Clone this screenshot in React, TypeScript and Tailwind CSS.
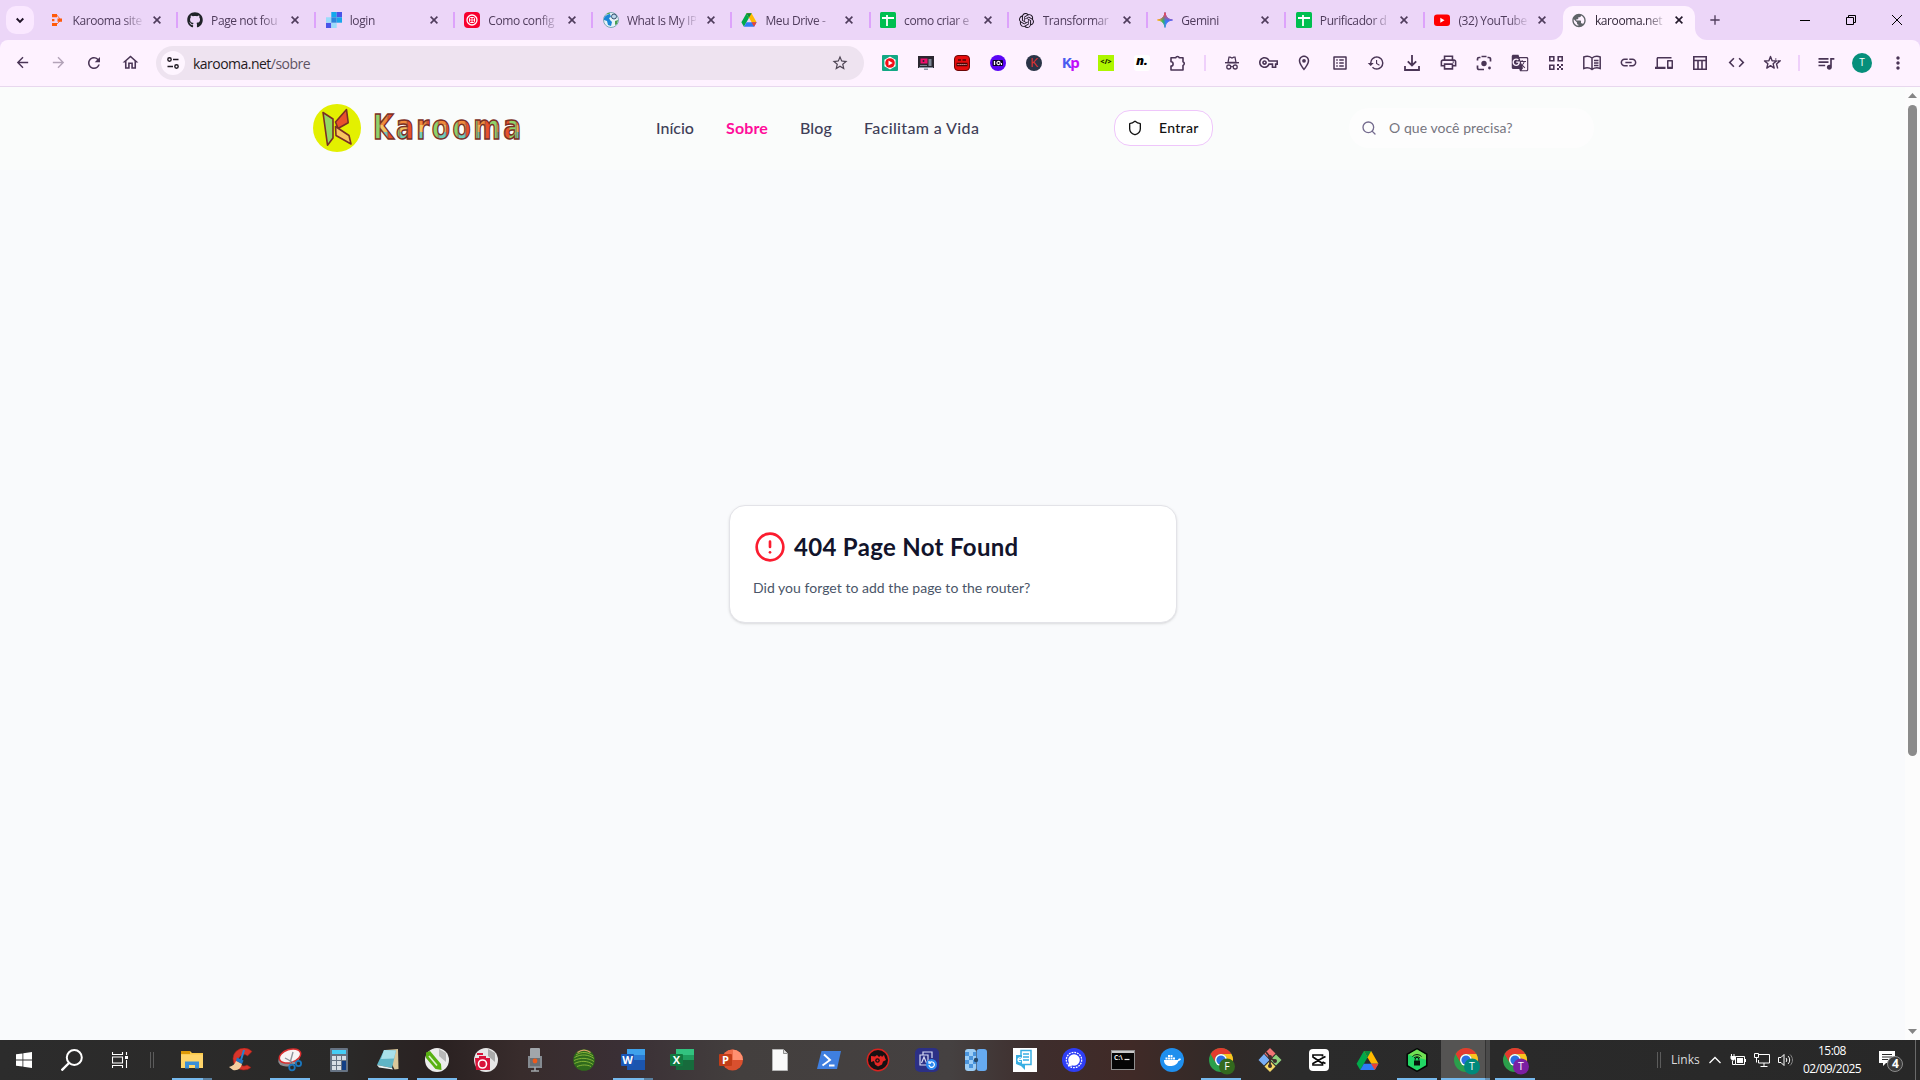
import React from "react";
import {
  MdArrowBack, MdArrowForward, MdRefresh, MdOutlineHome, MdStarBorder, MdOutlineVpnKey, MdOutlineLocationOn,
  MdOutlineListAlt, MdHistory, MdOutlinePrint, MdGTranslate, MdLink, MdDevices, MdCode,
  MdQueueMusic, MdMoreVert, MdPublic, MdAdd,
} from "react-icons/md";
import { FaGithub } from "react-icons/fa";
import { SiOpenai } from "react-icons/si";
import { CircleAlert, Search, Shield } from "lucide-react";

type SvgProps = { s?: number; vb?: string; children: React.ReactNode; className?: string };
const Svg = ({ s = 24, vb = "0 0 24 24", children, className = "" }: SvgProps) => (
  <svg width={s} height={s} viewBox={vb} fill="none" className={`shrink-0 ${className}`}>{children}</svg>
);

/* ---------- Favicons ---------- */
const Sheets = () => (
  <Svg s={16} vb="0 0 16 16">
    <rect width="16" height="16" rx="1.5" fill="#00bf50" />
    <path d="M2 6h12M7 3v11" stroke="#fff" strokeWidth="1.8" />
  </Svg>
);
const Drive = ({ s = 16 }: { s?: number }) => (
  <Svg s={s} vb="0 0 24 22">
    <path d="M8.2 1h7.6L12 7.800z" fill="#188038" />
    <path d="M8.200 1L.6 14.400 4.400 21 12 7.800z" fill="#00a94b" />
    <path d="M15.800 1H8.200L12 7.800l4 6.600h7.400z" fill="#ffba00" />
    <path d="M8.200 1L12 7.800l3.800-6.800z" fill="#0a8a3c" />
    <path d="M4.400 21h15.200l3.800-6.600H8.200z" fill="#2f7cf6" />
    <path d="M19.600 21l3.800-6.600h-7.700z" fill="#ea4335" />
  </Svg>
);
const favicons: Record<string, React.ReactNode> = {
  karooma: (
    <Svg s={16} vb="0 0 16 16">
      <path d="M3 2h5v3.2H3zM8.500 6.400H13v3.400H8.500zM3 11h5v3H3zM3 7h2.400v2.200H3z" fill="#ff5a0a" />
      <path d="M7 2l4 5M7 13l4-4" stroke="#ff5a0a" strokeWidth=".8" />
    </Svg>
  ),
  github: <FaGithub size={16} color="#1f2328" />,
  login: (
    <Svg s={16} vb="0 0 16 16">
      <path d="M5.300 0h5.400v5.300H5.300z" fill="#13a9ec" />
      <path d="M10.700 0H16v5.300h-5.300zM0 10.700h5.300V16H0z" fill="#4a54e8" />
      <path d="M0 5.300h5.300v5.400H0zM5.300 10.700h5.400V16H5.300z" fill="#9adcfa" />
      <path d="M5.300 5.300h5.400v5.400H5.300z" fill="#2c86dc" />
      <path d="M10.700 5.300H16v5.400h-5.300z" fill="#17a6ea" />
    </Svg>
  ),
  target: (
    <Svg s={16} vb="0 0 16 16">
      <rect width="16" height="16" rx="4" fill="#f8002e" />
      <circle cx="8" cy="8" r="5" stroke="#fff" strokeWidth="1.300" />
      <rect x="5.500" y="5.500" width="5" height="5" rx="1" stroke="#fff" />
      <path d="M5.500 8h5M8 5.500v5" stroke="#fff" strokeWidth=".8" />
    </Svg>
  ),
  ip: (
    <Svg s={16} vb="0 0 16 16">
      <circle cx="8" cy="8" r="7.500" fill="#e8f3f7" stroke="#7ba7b4" />
      <path d="M1 6c2-3 4-4 6-4l1 3-2 1 1 2 2 2-1 4-3-1-1-4-3-1z" fill="#1c86d6" />
      <path d="M12 9l3-1-1 4-2 1z" fill="#4a9f52" />
      <circle cx="11" cy="4.500" r="2.500" fill="#bcd7ec" stroke="#37506e" />
      <path d="M4 2l3-1" stroke="#59a94c" />
    </Svg>
  ),
  drive: <Drive />,
  sheets: <Sheets />,
  openai: <SiOpenai size={15} color="#1a1320" />,
  gemini: (
    <svg width="16" height="16" viewBox="0 0 16 16">
      <defs>
        <linearGradient id="gem" x1="0" y1="8" x2="16" y2="8" gradientUnits="userSpaceOnUse">
          <stop offset=".1" stopColor="#f9c012" /><stop offset=".38" stopColor="#28b46a" />
          <stop offset=".55" stopColor="#3a7bfa" /><stop offset="1" stopColor="#4a58f8" />
        </linearGradient>
        <linearGradient id="gemTop" x1="0" y1="0" x2="0" y2="9" gradientUnits="userSpaceOnUse">
          <stop offset=".2" stopColor="#f0405a" /><stop offset="1" stopColor="#f0405a" stopOpacity="0" />
        </linearGradient>
      </defs>
      <path d="M8 .5C8.700 5 11 7.300 15.500 8 11 8.700 8.700 11 8 15.500 7.300 11 5 8.700.5 8 5 7.300 7.300 5 8 .5z" fill="url(#gem)" stroke="url(#gem)" />
      <path d="M8 .5C8.700 5 11 7.300 15.500 8 11 8.700 8.700 11 8 15.500 7.300 11 5 8.700.5 8 5 7.300 7.300 5 8 .5z" fill="url(#gemTop)" stroke="url(#gemTop)" />
    </svg>
  ),
  youtube: (
    <Svg s={16} vb="0 0 16 16">
      <rect y="2.500" width="16" height="11.500" rx="3" fill="#f00" />
      <path d="M6.300 5.800v5l4.200-2.500z" fill="#fff" />
    </Svg>
  ),
  globe: <MdPublic size={17} color="#5f6368" />,
};

const tabs = [
  { icon: "karooma", title: "Karooma site" },
  { icon: "github", title: "Page not fou" },
  { icon: "login", title: "login" },
  { icon: "target", title: "Como config" },
  { icon: "ip", title: "What Is My IP" },
  { icon: "drive", title: "Meu Drive -" },
  { icon: "sheets", title: "como criar e" },
  { icon: "openai", title: "Transformar" },
  { icon: "gemini", title: "Gemini" },
  { icon: "sheets", title: "Purificador d" },
  { icon: "youtube", title: "(32) YouTube" },
];

const TabBody = ({ icon, title, active = false }: { icon: string; title: string; active?: boolean }) => (
  <>
    <span className="flex w-4 shrink-0 items-center justify-center">{favicons[icon]}</span>
    <span
      className={`mt-px ml-2 w-[69px] text-[12px] leading-4 tracking-[-0.4px] whitespace-nowrap [mask-image:linear-gradient(to_right,#000_50px,transparent_72px)] ${active ? "text-[#33283a]" : "text-[#4f3c5c]"}`}
    >
      {title}
    </span>
    <Svg s={8} vb="0 0 8 8" className={`ml-[11px] ${active ? "text-[#241a2c]" : "text-[#4f3c5c]"}`}>
      <path d="M.6.6l6.800 6.800M7.400.6L.6 7.400" stroke="currentColor" strokeWidth="1.600" />
    </Svg>
  </>
);

const TabStrip = () => (
  <div className="flex h-10 items-stretch bg-[#ecd6f8]">
    <div className="flex w-[37px] items-center pl-1.5">
      <div className="flex size-7 items-center justify-center rounded-[10px] bg-[#fae8ff]">
        <Svg s={8} vb="0 0 8 8"><path d="M.7 2.500L4 5.800l3.300-3.300" stroke="#1f1326" strokeWidth="1.900" /></Svg>
      </div>
    </div>
    {tabs.map((t, i) => (
      <div key={i} className="flex w-[138.6px] shrink-0 items-center">
        <span className={`h-4 w-0.5 ${i === 0 ? "bg-transparent" : "bg-[#dda3fb]"}`} />
        <span className="flex items-center pl-[9.5px]"><TabBody {...t} /></span>
      </div>
    ))}
    <div className="-ml-[10.6px] flex items-end">
      <svg width="12" height="12" className="mt-auto"><path d="M12 0v12H0A12 12 0 0 0 12 0z" fill="#fef2ff" /></svg>
      <div className="mt-1.5 flex h-[34px] w-[132px] items-center rounded-t-[10px] bg-[#fef2ff] pb-1.5 pl-2">
        <TabBody icon="globe" title="karooma.net" active />
      </div>
      <svg width="12" height="12" className="mt-auto"><path d="M0 0v12h12A12 12 0 0 1 0 0z" fill="#fef2ff" /></svg>
    </div>
    <div className="flex flex-1 items-center">
      <MdAdd size={16} color="#4f3c5c" />
      <div className="ml-auto flex text-black">
        <span className="flex w-[46px] justify-center"><Svg s={10} vb="0 0 10 10"><path d="M0 5.500h10" stroke="#000" /></Svg></span>
        <span className="flex w-[46px] justify-center"><Svg s={10} vb="0 0 10 10"><path d="M.5 2.500h7v7h-7zM2.500 2.500v-2h7v7h-2" stroke="#000" /></Svg></span>
        <span className="flex w-[46px] justify-center"><Svg s={10} vb="0 0 10 10"><path d="M0 0l10 10M10 0L0 10" stroke="#000" /></Svg></span>
      </div>
    </div>
  </div>
);

/* ---------- Toolbar ---------- */
const P = "#4a3556";
const extensionIcons: React.ReactNode[] = [
  <Svg s={16} vb="0 0 16 16"><rect width="16" height="16" rx="1" fill="#12a884" /><path d="M8 1.500l5.600 3.200v6.600L8 14.500l-5.600-3.200V4.700z" fill="#fff" /><circle cx="8" cy="8" r="4.800" fill="#f30f18" /><path d="M6.500 5.500v5L10.700 8z" fill="#fff" /></Svg>,
  <Svg s={16} vb="0 0 16 16"><rect y="1" width="16" height="12" fill="#2b2730" /><rect x="2.500" y="3.500" width="7" height="5" fill="#ef0f6c" /><path d="M10.500 4h3v7h-3zM2 10h7v1H2z" fill="#7d8795" /><path d="M1 12h14v1H1zM6 13.500h4V15H6z" fill="#8b96a6" /><circle cx="5.500" cy="6" r="1" fill="#2b2730" /></Svg>,
  <Svg s={16} vb="0 0 16 16"><rect x=".5" y=".5" width="15" height="15" rx="3.500" fill="#e60c0c" stroke="#6b0707" /><path d="M4 5h3M8.500 5h3.500" stroke="#4c0606" strokeWidth="1.600" /><path d="M2.500 9.500h11" stroke="#4c0606" strokeWidth="3.500" /><path d="M3.500 9.500h9" stroke="#f3b6b6" strokeWidth="1" strokeDasharray="1.200 .8" /></Svg>,
  <Svg s={16} vb="0 0 16 16"><circle cx="8" cy="8" r="8" fill="#5a05f5" /><rect x="2.500" y="5" width="10.500" height="6" rx="1" fill="#0c0226" /><path d="M4.500 6v4" stroke="#fff" strokeWidth="1.300" /><circle cx="8.500" cy="8" r="1.600" stroke="#fff" strokeWidth="1.100" /><path d="M11.500 8v2" stroke="#fff" strokeWidth="1.100" /></Svg>,
  <span className="flex size-4 items-center justify-center rounded-full bg-[#2a3447] text-[13px] leading-none font-medium text-[#e1322f]">K</span>,
  <span className="flex items-baseline text-[15px] leading-none font-bold tracking-[-1.5px] text-[#4a5df0]">K<span className="text-[#c20dfa]">p</span></span>,
  <span className="flex size-4 items-center justify-center bg-[#aef600] text-[7px] font-extrabold text-[#1c2a00]">&lt;/&gt;</span>,
  <span className="flex size-4 items-center justify-center rounded-[3px] bg-white pb-1 text-[13px] leading-none font-black text-black italic">n.</span>,
  <Svg s={18} vb="0 0 18 18"><path d="M2 3.800h4.700a1.900 1.900 0 0 1 3.600 0H14v4a1.900 1.900 0 0 1 0 3.600V16H2v-4a2 2 0 0 0 0-4.200z" stroke={P} strokeWidth="1.600" strokeLinejoin="round" /></Svg>,
];
const toolIcons: React.ReactNode[] = [
  <Svg s={18} vb="0 0 18 18"><path d="M2 8.700h14" stroke={P} strokeWidth="1.400" /><path d="M5 8.500L6 3.200h1.200L9 4l1.800-.8H12l1 5.300z" stroke={P} strokeWidth="1.300" /><circle cx="5.800" cy="13" r="2" stroke={P} strokeWidth="1.300" /><circle cx="12.200" cy="13" r="2" stroke={P} strokeWidth="1.300" /><path d="M7.800 12.600h2.400" stroke={P} /></Svg>,
  <MdOutlineVpnKey size={19} color={P} />,
  <MdOutlineLocationOn size={18} color={P} />,
  <MdOutlineListAlt size={18} color={P} />,
  <MdHistory size={18} color={P} />,
  <Svg s={18} vb="0 0 18 18"><path d="M9 1v10M4.800 7.300L9 11.500l4.200-4.200M2 12v4h14v-4" stroke={P} strokeWidth="1.800" /></Svg>,
  <MdOutlinePrint size={19} color={P} />,
  <Svg s={18} vb="0 0 18 18"><path d="M2.500 6.500V5A1.500 1.500 0 0 1 4 3.500h1.500M12.500 3.500H14A1.500 1.500 0 0 1 15.500 5v2.500M2.500 11.500V14A1.500 1.500 0 0 0 4 15.500h5M6.500 2.500h5" stroke={P} strokeWidth="1.700" /><circle cx="9" cy="9.500" r="2.700" fill={P} /><circle cx="14.500" cy="14" r="1.400" fill={P} /></Svg>,
  <MdGTranslate size={18} color={P} />,
  <Svg s={16} vb="0 0 16 16"><path d="M1.800 1.800h4v4h-4zM10.200 1.800h4v4h-4zM1.800 10.200h4v4h-4z" stroke={P} strokeWidth="1.600" /><path d="M9 9h2v2H9zM13 9h2v2h-2zM11 11h2v2h-2zM9 13h2v2H9zM13 13h2v2h-2z" fill={P} /></Svg>,
  <Svg s={20} vb="0 0 20 20"><path d="M10 5C7.500 3.200 4.500 3 1.800 4v11.500c2.700-1 5.700-.8 8.200 1 2.500-1.800 5.500-2 8.200-1V4c-2.700-1-5.700-.8-8.200 1zM10 5v11" stroke={P} strokeWidth="1.500" /><path d="M12 7.500h4.500M12 10h4.500M12 12.500h4.500" stroke={P} strokeWidth="1.300" /></Svg>,
  <MdLink size={19} color={P} />,
  <MdDevices size={18} color={P} />,
  <Svg s={18} vb="0 0 18 18"><path d="M2.800 2.800h12.400v12.400H2.800zM2.800 6.500h12.400M7 6.500V15M11 6.500V15" stroke={P} strokeWidth="1.600" /></Svg>,
  <MdCode size={19} color={P} />,
  <Svg s={18} vb="0 0 18 18"><path d="M7.500 2.500l1.600 4.200 4.400.2-3.400 2.800 1.100 4.400-3.700-2.400-3.700 2.400 1.100-4.400L1.500 6.900l4.400-.2z" stroke={P} strokeWidth="1.400" strokeLinejoin="round" /><path d="M14.500 7h2.500l-3.500 3 1.200 4.500M13 5.500l-.5-1" stroke={P} strokeWidth="1.400" /></Svg>,
];
const Cell = ({ children }: { children: React.ReactNode }) => (
  <span className="flex w-9 shrink-0 items-center justify-center">{children}</span>
);
const Divider = () => <span className="flex w-[18px] shrink-0 justify-center"><span className="h-4 w-0.5 bg-[#efd0fb]" /></span>;

const Toolbar = () => (
  <div className="bg-[#ecd6f8]">
    <div className="flex h-[47px] items-center rounded-t-lg border-b border-[#e8d8ee] bg-[#fef2ff] pb-px pl-1">
      <Cell><MdArrowBack size={17} color={P} /></Cell>
      <Cell><MdArrowForward size={17} color="#b3a3b8" /></Cell>
      <Cell><MdRefresh size={18} color={P} /></Cell>
      <Cell><MdOutlineHome size={19} color={P} /></Cell>
      <div className="ml-2 flex h-[34px] w-[708px] items-center rounded-full bg-[#eee3f0] pr-[15px] pl-[5px]">
        <span className="flex size-6 items-center justify-center rounded-full bg-[#fef5ff]">
          <Svg s={14} vb="0 0 14 14"><path d="M7 3.500h5.500M1.500 10.500H7" stroke="#1f1a22" strokeWidth="1.600" /><circle cx="3.500" cy="3.500" r="1.700" stroke="#1f1a22" strokeWidth="1.400" /><circle cx="10.500" cy="10.500" r="1.700" stroke="#1f1a22" strokeWidth="1.400" /></Svg>
        </span>
        <span className="mt-px ml-2 text-[14px] tracking-[-0.52px] text-[#1f1a22]">karooma.net<span className="text-[#5e5363]">/sobre</span></span>
        <MdStarBorder size={18} color="#4d4453" className="ml-auto" />
      </div>
      <span className="w-2 shrink-0" />
      {extensionIcons.map((ic, i) => <Cell key={i}>{ic}</Cell>)}
      <Divider />
      {toolIcons.map((ic, i) => <Cell key={i}>{ic}</Cell>)}
      <Divider />
      <Cell><MdQueueMusic size={20} color={P} /></Cell>
      <Cell><span className="flex size-5 items-center justify-center rounded-full bg-[#068f7b] text-[10px] text-white">T</span></Cell>
      <Cell><MdMoreVert size={20} color={P} /></Cell>
    </div>
  </div>
);

/* ---------- Page ---------- */
const B = "#7a2f24";
const Emblem = () => (
  <svg width="48" height="48" viewBox="0 0 48 48">
    <circle cx="24" cy="24" r="24" fill="#e3f000" />
    <g stroke={B} strokeWidth="1.600" strokeLinejoin="round">
      <path d="M10 8.500L20 15v19l-5.500 7.200z" fill="#93d864" />
      <path d="M22.500 18L33.500 5.500l1.700 13.200L25 24.500z" fill="#e8512c" />
      <path d="M22.500 22.500L36 31.500l2 8.500-15-8.500z" fill="#f8c45f" />
    </g>
  </svg>
);
const Wordmark = () => (
  <svg width="152" height="32" viewBox="0 0 152 32">
    <defs>
      <pattern id="tiles" width="25" height="24" patternUnits="userSpaceOnUse" y="4">
        <path d="M0 0h9v24H0z" fill="#8fd46a" />
        <path d="M9 0h10v9H9z" fill="#f08a3c" />
        <path d="M9 9h10v7H9z" fill="#f2c463" />
        <path d="M9 16h10v8H9z" fill="#6fcdbb" />
        <path d="M19 0h6v24h-6z" fill="#e8512c" />
        <path d="M9 0v24M19 0v24" stroke={B} strokeWidth=".8" />
      </pattern>
    </defs>
    <text
      transform="scale(.78 1)" x="0" y="27" textLength="190" fontSize="34" fontWeight="700" fill="url(#tiles)"
      stroke={B} strokeWidth="1.500" fontFamily="DejaVu Sans, sans-serif"
    >
      Karooma
    </text>
  </svg>
);

const Header = () => (
  <header className="flex h-[83px] items-center bg-[#fafcfb] pb-0.5 pl-[313px] font-[Lato,sans-serif]">
    <Emblem />
    <span className="ml-3"><Wordmark /></span>
    <nav className="ml-[131px] flex gap-8 text-[16px] font-medium whitespace-nowrap text-[#3f3f58]">
      <a className="w-[38px]">Início</a>
      <a className="w-[42px] font-bold tracking-[0.15px] text-[#ff0d9a]">Sobre</a>
      <a className="w-[32px] tracking-[0.1px]">Blog</a>
      <a className="w-[116px] tracking-[0.36px]">Facilitam a Vida</a>
    </nav>
    <button className="ml-[134px] flex h-9 w-[99px] items-center rounded-2xl border border-[#efc6fb] bg-white pl-[12px] text-[14px] font-medium tracking-[0.3px] text-[#111]">
      <Shield size={16} strokeWidth={2} />
      <span className="ml-4">Entrar</span>
    </button>
    <div className="ml-[136px] flex h-10 w-[245px] items-center rounded-full bg-[#fdfdfd] pl-[12px]">
      <Search size={16} color="#746b8e" />
      <span className="ml-3 text-[14px] tracking-[0.05px] text-[#76757f]">O que você precisa?</span>
    </div>
  </header>
);

const NotFound = () => (
  <main className="flex flex-1 flex-col bg-[#f9fafc] font-[Lato,sans-serif]">
    <div className="mt-[335px] ml-[729px] h-[118px] w-[448px] rounded-2xl border border-[#e3e3e8] bg-white py-6 pr-6 pl-[23px] shadow-sm">
      <div className="flex items-center gap-2 pl-px">
        <CircleAlert size={32} color="#fb1c2f" />
        <h1 className="pt-px text-[24px] leading-8 font-bold tracking-[0.32px] text-[#12142b]">404 Page Not Found</h1>
      </div>
      <p className="mt-[15px] text-[14px] leading-5 tracking-[0.03px] text-[#4a5568]">Did you forget to add the page to the router?</p>
    </div>
  </main>
);

const Scrollbar = () => (
  <div className="flex w-[15px] flex-col items-center justify-between bg-[#fcfcfc] py-1.5">
    <Svg s={9} vb="0 0 9 5" className="h-[5px]"><path d="M0 5L4.500 0 9 5z" fill="#858585" /></Svg>
    <div className="mt-[7px] mb-auto h-[651px] w-[9px] rounded-full bg-[#8b8b8b]" />
    <Svg s={9} vb="0 0 9 5" className="h-[5px]"><path d="M0 0l4.500 5L9 0z" fill="#858585" /></Svg>
  </div>
);

/* ---------- Taskbar ---------- */
const Office = ({ l, c, a, b, d }: { l: string; c: string; a: string; b: string; d: string }) => (
  <Svg>
    <path d="M6 1h18v6H6z" fill={a} /><path d="M6 7h18v5H6z" fill={b} /><path d="M6 12h18v10H6z" fill={d} />
    <rect y="6" width="13" height="12" rx="1" fill={c} />
    <text x="6.500" y="16" textAnchor="middle" fontSize="11" fontWeight="700" fill="#fff">{l}</text>
  </Svg>
);
const Chrome = ({ l, c }: { l: string; c: string }) => (
  <svg width="26" height="28" viewBox="0 0 26 28" className="-mb-1 ml-0.5">
    <circle cx="12" cy="12" r="12" fill="#2b9f4b" />
    <path d="M1.600 6A12 12 0 0 1 22.400 6H12a6 6 0 0 0-5.200 9z" fill="#e33b2e" />
    <path d="M22.400 6A12 12 0 0 1 12 24l5.200-9A6 6 0 0 0 12 6z" fill="#fcc31e" />
    <circle cx="12" cy="12" r="6" fill="#fff" /><circle cx="12" cy="12" r="4.600" fill="#2a6fe0" />
    <circle cx="18" cy="18.500" r="8" fill={c} />
    <text x="18" y="22.300" textAnchor="middle" fontSize="10.500" fill="#fff">{l}</text>
  </svg>
);
type Task = { icon: React.ReactNode; state?: "open" | "multi" | "active" };
const tasks: Task[] = [
  { state: "multi", icon: <Svg><path d="M1 3h9l2 2h11v15H1z" fill="#f9c846" /><path d="M1 3h9v3H1z" fill="#dd9a08" /><path d="M1 6.500h22V20H1z" fill="#ffd56a" /><path d="M5 20.500v-7h14v7h-4v-3.500H9v3.500z" fill="#3b8fd8" /></Svg> },
  { icon: <Svg><path d="M23 3.500A11 11 0 1 0 22 19.500l-4-2.500a5.500 5.500 0 1 1 .5-9z" fill="#d9352b" stroke="#9b1e18" strokeWidth=".6" /><path d="M15 2l-3 10" stroke="#2584d0" strokeWidth="2" /><path d="M8 9.500l6.500 3-1.500 3.500-6-3z" fill="#1f75c4" /><path d="M7 13l6 3c-1 4-4 7-9 6l-4-3c4-1 6-3 7-6z" fill="#f6cfa0" /></Svg> },
  { state: "open", icon: <Svg><ellipse cx="11" cy="11" rx="11" ry="7" fill="#8b8b90" transform="rotate(-18 11 11)" /><ellipse cx="12" cy="8" rx="11" ry="6.500" fill="#f7f4f4" stroke="#d92e2e" strokeWidth="1.500" transform="rotate(-18 12 8)" /><path d="M15 4l-3 11M7 10l11 6" stroke="#8f959c" strokeWidth="1.400" /><circle cx="14" cy="19.500" r="2.800" stroke="#1a76bd" strokeWidth="1.800" /><circle cx="20.500" cy="15.500" r="2.600" stroke="#1a76bd" strokeWidth="1.800" /></Svg> },
  { icon: <Svg><rect x="3" width="18" height="24" rx="1" fill="#667383" /><rect x="5" y="2" width="14" height="4" fill="#46cdf5" /><path d="M5 8h4v4H5zM10 8h4v4h-4zM15 8h4v4h-4zM5 13h4v4H5zM10 13h4v4h-4zM5 18h4v4H5zM10 18h4v4h-4z" fill="#d7dee5" /><path d="M15 13h4v9h-4z" fill="#123f85" /></Svg> },
  { state: "open", icon: <Svg><path d="M9 2l13-1 .5 20-4 .5z" fill="#d9c79a" /><path d="M8 2l12 .5-4 17.500L1 17z" fill="#5fb5c6" /><path d="M8 2l12 .5-2 8L5 11z" fill="#a9e1ea" /><path d="M1 17l15 3 1 1.500-14-2z" fill="#e9f3f3" /></Svg> },
  { state: "open", icon: <Svg><circle cx="12" cy="12" r="12" fill="#ececec" /><path d="M14 1l7 4v9l-7-6z" fill="#b9b9b9" /><path d="M1 4.500l4-1.500 11 13 .5 6-6-1L1 10z" fill="#58b112" /><path d="M4 8l8 9.500" stroke="#dff2cf" strokeWidth="1.600" /></Svg> },
  { icon: <Svg><circle cx="12" cy="12" r="12" fill="#e6e6e6" /><path d="M14 1l7 4v9l-7-6z" fill="#aaa" /><path d="M1 10h4V8h7v2h4v12H2z" fill="#d8143a" /><circle cx="8.500" cy="16" r="4" fill="#d8143a" stroke="#fff" strokeWidth="1.600" /><path d="M3 5h6v2H3z" fill="#d8143a" /></Svg> },
  { icon: <Svg><rect x="7" width="10" height="17" rx="1" fill="#a1a6ab" /><path d="M6 8v11h12V8" stroke="#858b91" strokeWidth="2" /><rect x="7" y="10" width="10" height="8" fill="#6b7075" /><circle cx="12" cy="13" r="2.400" fill="#ee5a1c" /><path d="M12 19v4M8 23h8" stroke="#a1a6ab" strokeWidth="1.600" /></Svg> },
  { icon: <Svg><circle cx="12" cy="12" r="10.800" fill="#2f6a1c" /><path d="M4 7c6-4 12-3 17 1M2.500 9.500c7-4 14-3 19.500 1M2 12.500c6-3 14-3 20 1M2.500 15.500c6-3 13-3 18.500 1M5 18.500c5-2 10-2 14 0" stroke="#8dbb3a" strokeWidth=".9" /><path d="M5.500 4.500c4-3 9-3 13 0" stroke="#dba26a" strokeWidth="1.300" /></Svg> },
  { state: "multi", icon: <Office l="W" c="#1a57b8" a="#3fa2ec" b="#2b7cd6" d="#1b55ae" /> },
  { icon: <Office l="X" c="#117a41" a="#32c27f" b="#1f9d5e" d="#176b3c" /> },
  { icon: <Svg><circle cx="13.500" cy="12" r="10.500" fill="#d9502e" /><path d="M13.500 1.500A10.500 10.500 0 0 1 24 12H13.500z" fill="#ff9070" /><path d="M13.500 1.500V12H3A10.500 10.500 0 0 1 13.500 1.500z" fill="#ee6c49" /><rect y="6" width="13" height="12" rx="1" fill="#c23d18" /><text x="6.500" y="16" textAnchor="middle" fontSize="11" fontWeight="700" fill="#fff">P</text></Svg> },
  { icon: <Svg><path d="M4.500 1.500h11l4 4v17h-15z" fill="#fafafa" stroke="#bdbdbd" strokeWidth=".8" /><path d="M15.500 1.500v4h4" fill="#ddd" stroke="#777" strokeWidth=".8" /></Svg> },
  { icon: <Svg><path d="M4.500 3H24l-4 18H0z" fill="#3f7fe0" /><path d="M7 6.500l6 5.500-7.500 5.500M12 17.500h5.500" stroke="#fff" strokeWidth="1.900" /></Svg> },
  { icon: <Svg><circle cx="12" cy="12" r="10.700" fill="#161112" stroke="#d9231f" strokeWidth="1.400" /><path d="M5 8l4 .5L11 7l2 2 2-1.500 1 1.500 2-2 1 3 1 2-3 1.500-1 3-4 2-3-2-1-3.500-3 1z" fill="#e52724" /><circle cx="11.500" cy="12.500" r="2.300" fill="#161112" /><circle cx="11.500" cy="12.500" r="1" fill="#e52724" /></Svg> },
  { icon: <Svg><rect width="24" height="24" rx="5" fill="#2c3086" /><path d="M8 7V4h9v6M5 7h8v10H5z" stroke="#d8dbf5" strokeWidth="1.200" /><path d="M6.500 15L9 9l2.500 6" stroke="#d8dbf5" strokeWidth="1.200" /><circle cx="16.500" cy="16.500" r="5.500" fill="#2b88f0" /><path d="M14 17a2.700 2.700 0 1 0 1-2.500M14 13v2.200h2" stroke="#fff" strokeWidth="1.200" /></Svg> },
  { icon: <Svg><rect x="1" y="1" width="11" height="22" rx="3" fill="#9ccdf5" /><path d="M1 4h4v4H1zM5 8h4v4H5zM9 4h3v4H9zM1 12h4v4H1zM9 12h3v4H9zM5 16h4v4H5z" fill="#4a94dc" /><rect x="12.500" y="1" width="10.500" height="22" rx="3" fill="#66aaf0" /><circle cx="12" cy="12" r="2.200" fill="#26496b" /></Svg> },
  { icon: <Svg><path d="M0 0h24v24H0z" fill="#fff" /><path d="M8 2.500h10v14H8zM10 6h6M10 9h6M10 12h6" stroke="#38aee3" strokeWidth="1.500" /><path d="M3 7h6v9h3v6l-4-4-5-2z" fill="#38aee3" /><path d="M5 11.500h4a2 2 0 1 0-1 2" stroke="#fff" strokeWidth="1.200" /></Svg> },
  { icon: <Svg><circle cx="12" cy="12" r="12" fill="#2e3ef5" /><circle cx="12" cy="12" r="7.700" stroke="#fff" strokeWidth="1.200" strokeDasharray="1.800 1" /><circle cx="12" cy="12" r="5.800" fill="#fff" /><path d="M6 18.500l1-4.500 3.500 3.500z" fill="#fff" /></Svg> },
  { icon: <Svg><rect x=".5" y="2.500" width="23" height="19" fill="#050505" stroke="#8e8e8e" /><path d="M1 3h22v2H1z" fill="#c9c9c9" /><text x="3" y="12" fontSize="6.500" fontWeight="700" fill="#eee">C:\</text><path d="M13.500 11.500h5" stroke="#eee" strokeWidth="1.200" /></Svg> },
  { icon: <Svg><circle cx="12" cy="12" r="12" fill="#1f8fee" /><path d="M4 12h14c.5-1.500 1.500-1.700 3-1-.7 1.500-1.500 1.800-2.500 2C17 17 13.500 18 10.500 18 6.500 18 4 16 4 12zM5.500 9.500h2v2h-2zM8 9.500h2v2H8zM10.500 9.500h2v2h-2zM13 9.500h2v2h-2zM8 7h2v2H8zM10.500 7h2v2h-2z" fill="#fff" /></Svg> },
  { state: "open", icon: <Chrome l="F" c="#33691e" /> },
  { icon: <Svg><path d="M12 0l5.500 5.500L12 11 6.500 5.500z" fill="#f07474" /><path d="M6 6l5.500 6L6 17.500.5 12z" fill="#79aef5" /><path d="M18 6.500l5.500 5.500-5.500 5.500-5.500-5.500z" fill="#8ed17d" /><path d="M12 13l5.500 5.500L12 24l-5.500-5.500z" fill="#f5d667" /><path d="M8 4l4 5v10M12 10l5 3" stroke="#3d2c2c" strokeWidth="1.800" /><circle cx="12" cy="9" r="2" fill="#3d2c2c" /><circle cx="12" cy="18" r="2" fill="#3d2c2c" /><circle cx="17" cy="13" r="2" fill="#3d2c2c" /></Svg> },
  { icon: <Svg><rect x="2" y="1" width="20" height="22" rx="4" fill="#fff" /><path d="M18.500 8.500L15.500 10 6 15.500v1.500h9.500v-1.500L6 9V7h9.500v1.500M18.500 15.500l-3-1.500" stroke="#0a0a0a" strokeWidth="1.700" /></Svg> },
  { icon: <Drive s={23} /> },
  { state: "open", icon: <Svg><path d="M12 .7l9.800 5.600v11.400L12 23.300l-9.800-5.600V6.300z" fill="#22d765" stroke="#050505" strokeWidth="1.500" /><path d="M12 1.500l9 5.200v5L3 6.700z" fill="#a5e648" opacity=".6" /><rect x="9" y="12.500" width="6" height="5" fill="#06140a" /><path d="M10.200 12.500v-1.300a1.800 1.800 0 0 1 3.600 0v1.300M7.500 8.500c2.500-2.500 6.500-2.500 9 0M9 10c1.500-1.600 4.500-1.600 6 0" stroke="#06140a" /></Svg> },
  { state: "active", icon: <Chrome l="T" c="#00897b" /> },
  { state: "open", icon: <Chrome l="T" c="#7b1fa2" /> },
];

const TaskItem = ({ icon, state }: Task) => (
  <div className={`flex h-10 w-[49px] shrink-0 flex-col items-center ${state === "active" ? "bg-[linear-gradient(90deg,#555453_44px,#333_44px,#333_45px,#4a4a4a_45px)]" : ""}`}>
    <span className="flex h-[38px] items-center pt-0.5">{icon}</span>
    {state === "open" && <span className="h-0.5 w-10 bg-[#76b9ed]" />}
    {state === "active" && <span className="flex h-0.5 w-full"><span className="w-[44px] bg-[#76b9ed]" /><span className="flex-1 bg-[#648fb2]" /></span>}
    {state === "multi" && <span className="flex h-0.5 w-10"><span className="w-[31px] bg-[#76b9ed]" /><span className="flex-1 bg-[#587f9f]" /></span>}
  </div>
);

const Taskbar = () => (
  <footer className="flex h-10 items-center bg-[linear-gradient(90deg,#2c2c2c_0px,#2a2928_350px,#2a2121_440px,#382c2c_520px,#3a2f35_620px,#433f3e_740px,#454141_950px,#3e2d2c_1040px,#402a27_1130px,#302a28_1230px,#2b2b2b_1300px,#282828_1920px)]">
    <span className="flex w-12 justify-center"><Svg s={16} vb="0 0 16 16"><path d="M0 2.300L6.500 1.400v6.100H0zM7.300 1.300L16 0v7.500H7.300zM0 8.400h6.500v6.200L0 13.700zM7.300 8.400H16V16l-8.700-1.300z" fill="#fff" /></Svg></span>
    <span className="flex w-12 justify-center"><Svg s={22} vb="0 0 22 22"><circle cx="13.300" cy="8.500" r="7.500" stroke="#fff" strokeWidth="2" /><path d="M8 14l-7.500 7.500" stroke="#fff" strokeWidth="2.400" /></Svg></span>
    <span className="flex w-12 justify-center"><Svg s={16} vb="0 0 16 16"><path d="M.5 0v2.500h10V0M.5 16v-2.500h10V16M.5 5h10v6H.5zM14.500 0v3M14.500 8v8" stroke="#fff" strokeWidth="1.100" /><path d="M13 4h3v3h-3z" fill="#fff" /></Svg></span>
    <span className="ml-1.5 h-4 w-1 border-x border-[#5c5c5c]" />
    <div className="ml-[13px] flex">{tasks.map((t, i) => <TaskItem key={i} {...t} />)}</div>
    <div className="ml-auto flex h-10 items-center text-[12px] text-white">
      <span className="h-4 w-1 border-x border-[#5c5c5c]" />
      <span className="ml-[10px] w-[27px] whitespace-nowrap text-[#dcdcdc]">Links</span>
      <Svg s={12} vb="0 0 12 12" className="ml-[11px]"><path d="M.5 9L6 3.500 11.500 9" stroke="#fff" strokeWidth="1.300" /></Svg>
      <Svg s={16} vb="0 0 16 16" className="ml-[9px]"><path d="M5.500 4.500h9v8h-9zM2.500 9v3.500h3M1.500 2v2M4 2v2" stroke="#fff" /><path d="M7 6h6v5H7zM.5 4h5v2.500L4 8.500H2L.5 6.500zM15 7h1v3h-1z" fill="#fff" /></Svg>
      <Svg s={16} vb="0 0 16 16" className="ml-2"><path d="M5 2.500h10.500v8.500H4.500V8M10 11v3M6.500 14.500h7M.5 1.500h4v4h-4zM2.500 5.500v5" stroke="#fff" /></Svg>
      <Svg s={16} vb="0 0 16 16" className="ml-2"><path d="M.5 5.500H3l3-3v11l-3-3H.5zM8 6c1 1 1 3 0 4M10 4c2.200 2 2.200 6 0 8" stroke="#fff" /><path d="M12 2.500c3.300 3 3.300 8 0 11" stroke="#888" /></Svg>
      <div className="ml-[9px] flex w-[58px] flex-col items-center text-[12px] leading-[18px] tracking-[-0.55px] whitespace-nowrap"><span>15:08</span><span>02/09/2025</span></div>
      <span className="relative ml-[18px] h-6 w-6">
        <Svg s={24}><path d="M0 3h16v12H7l-3 3v-3H0z" fill="#fff" /><path d="M3 6.500h10M3 9h10M3 11.500h6" stroke="#2a2a2a" /><circle cx="16" cy="16" r="7.500" fill="#3a3a3a" stroke="#8c8c8c" /></Svg>
        <span className="absolute top-2 left-[13px] text-[12px] leading-4 font-bold">4</span>
      </span>
      <span className="ml-[12px] h-10 w-[5px] border-l border-[#6a6a6a]" />
    </div>
  </footer>
);

export default function App() {
  return (
    <div className="flex h-screen w-full flex-col overflow-hidden font-[Open_Sans,Noto_Sans,sans-serif]">
      <TabStrip />
      <Toolbar />
      <div className="flex min-h-0 flex-1">
        <div className="flex min-w-0 flex-1 flex-col"><Header /><NotFound /></div>
        <Scrollbar />
      </div>
      <Taskbar />
    </div>
  );
}
